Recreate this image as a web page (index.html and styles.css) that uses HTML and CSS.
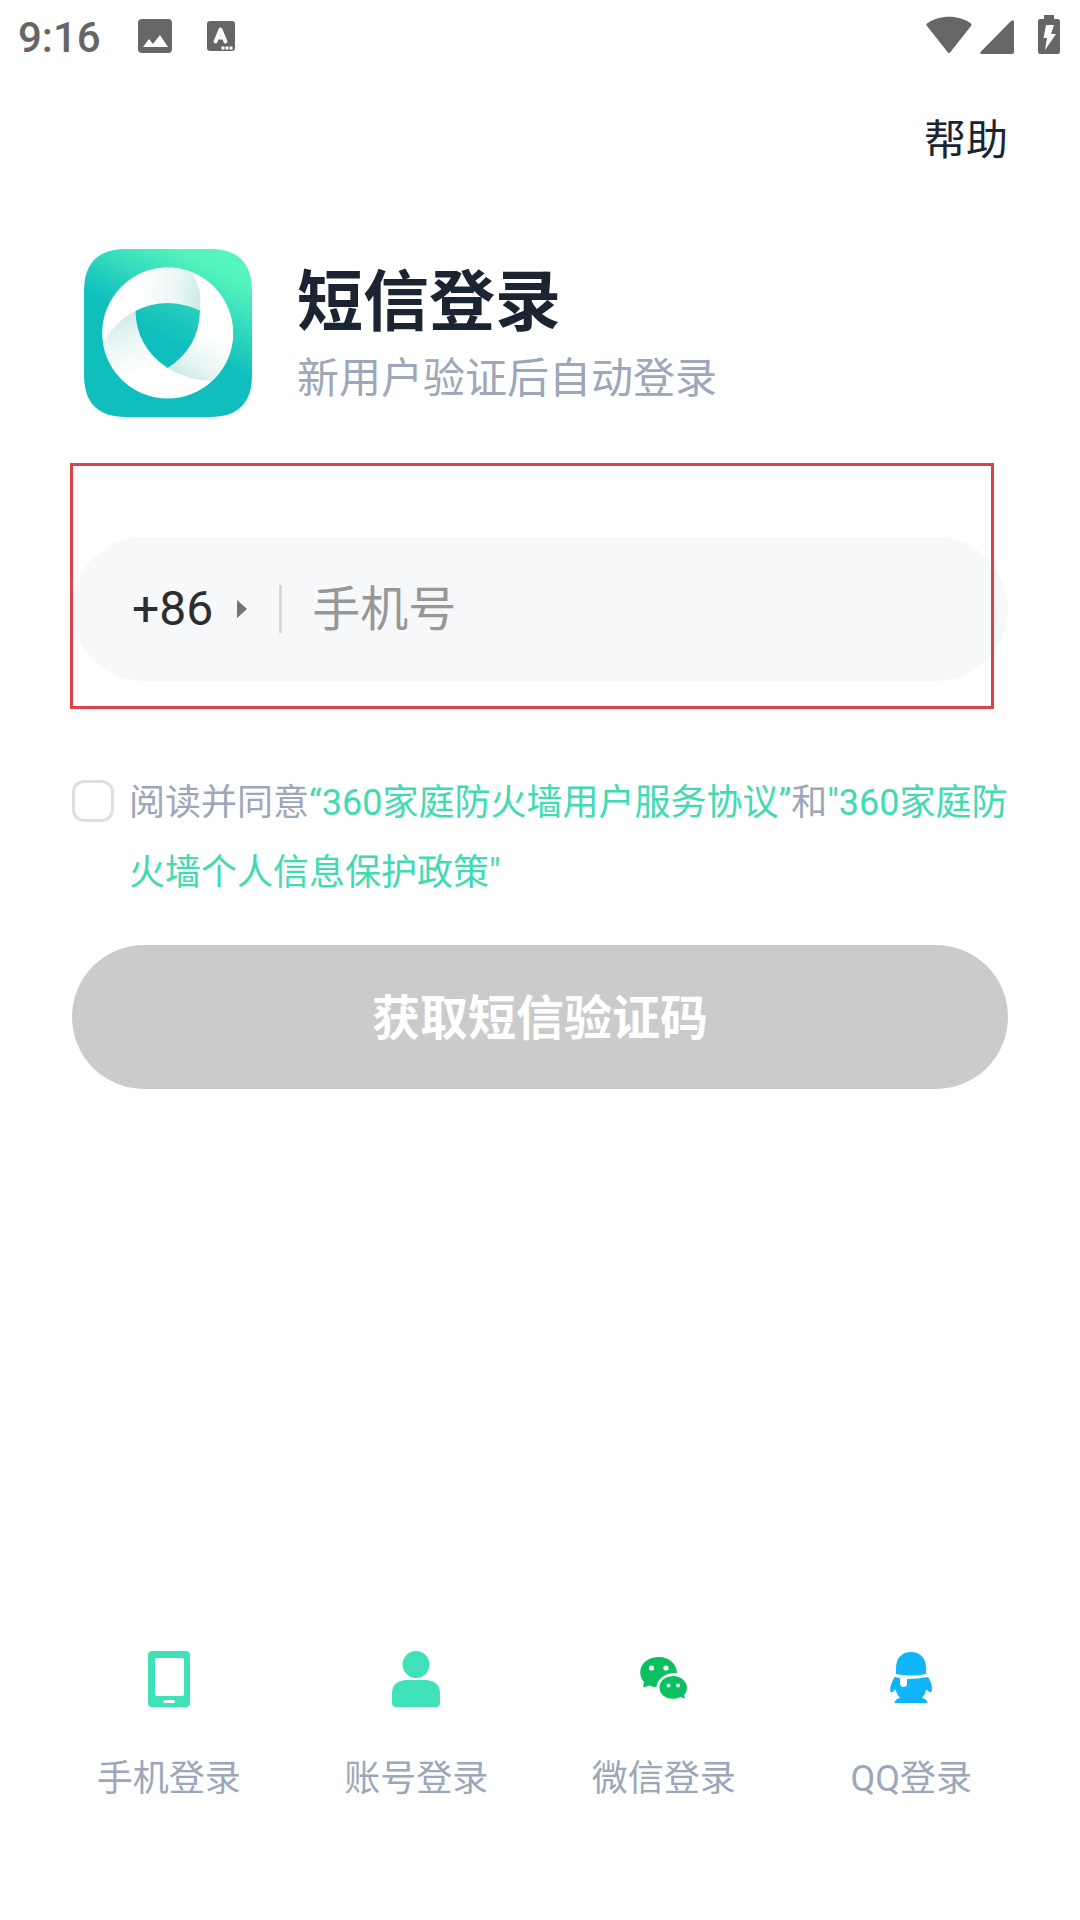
FILE: index.html
```html
<!DOCTYPE html>
<html lang="zh-CN">
<head>
<meta charset="utf-8">
<meta name="viewport" content="width=device-width, initial-scale=1">
<title>短信登录</title>
<link rel="stylesheet" href="styles.css">
</head>
<body>
<header class="status-bar">
  <div class="status-left">
    <time class="clock">9:16</time>
    <svg class="icon-image" width="34" height="34" viewBox="0 0 34 34" aria-hidden="true">
      <rect width="34" height="34" rx="4" fill="#666"/>
      <path d="M5 28l6-8 4 5 7-9 8 12z" fill="#fff"/>
    </svg>
    <svg class="icon-input" width="28" height="30" viewBox="0 0 28 30" aria-hidden="true">
      <rect width="28" height="30" rx="3" fill="#666"/>
      <path d="M8.500 20.500L13.500 8.500L18.500 20.500M10.500 16.500h6" fill="none" stroke="#fff" stroke-width="3.800" stroke-linecap="round" stroke-linejoin="round"/>
      <path d="M14.500 25.500h3v3h-3zM18.500 25.500h3v3h-3zM22.500 25.500h3v3h-3z" fill="#fff"/>
    </svg>
  </div>
  <div class="status-right">
    <svg width="46" height="40" viewBox="0 0 46 40" aria-hidden="true">
      <path d="M1 8.500C13-.500 33-.500 45 8.500Q46 9.500 45 11L24.500 37Q23 39 21.500 37L1 11Q0 9.500 1 8.500z" fill="#666"/>
    </svg>
    <svg class="icon-signal" width="34" height="40" viewBox="0 0 34 40" aria-hidden="true">
      <path d="M34 7v30q0 2-2 2H2q-3 0-1-2.500L31 6q3-2 3 1z" fill="#666"/>
    </svg>
    <svg class="icon-battery" width="22" height="40" viewBox="0 0 22 40" aria-hidden="true">
      <path d="M6 0h10v4h4q2 0 2 2v30q0 3-2 3H2q-2 0-2-3V6q0-2 2-2h4z" fill="#666"/>
      <path d="M8 10h8l-3 9h5L7 35l2-12H5.500z" fill="#fff"/>
    </svg>
  </div>
</header>

<nav class="top-nav"><a class="help" href="#help">帮助</a></nav>

<main class="login">
  <div class="brand">
    <svg class="logo" width="168" height="168" viewBox="0 0 168 168" aria-hidden="true">
      <defs>
        <linearGradient id="tile" gradientUnits="userSpaceOnUse" x1="161" y1="27" x2="120" y2="105">
          <stop offset="0" stop-color="#55f6bd"/>
          <stop offset=".15" stop-color="#50f0bd"/>
          <stop offset="1" stop-color="#10bfbd"/>
        </linearGradient>
        <linearGradient id="core" gradientUnits="userSpaceOnUse" x1="110" y1="50" x2="88" y2="92">
          <stop offset="0" stop-color="#2fd0bc"/>
          <stop offset="1" stop-color="#10bfbd"/>
        </linearGradient>
        <linearGradient id="fold-top" gradientUnits="userSpaceOnUse" x1="117" y1="44" x2="55" y2="40">
          <stop offset="0" stop-color="#cbebe6"/>
          <stop offset=".35" stop-color="#e9f6f4"/>
          <stop offset="1" stop-color="#fff"/>
        </linearGradient>
        <linearGradient id="fold-left" gradientUnits="userSpaceOnUse" x1="38" y1="66" x2="58" y2="122">
          <stop offset="0" stop-color="#cbebe6"/>
          <stop offset=".35" stop-color="#e6f5f3"/>
          <stop offset="1" stop-color="#fff"/>
        </linearGradient>
        <linearGradient id="fold-right" gradientUnits="userSpaceOnUse" x1="105" y1="133" x2="132" y2="88">
          <stop offset="0" stop-color="#cbebe6"/>
          <stop offset=".35" stop-color="#e6f5f3"/>
          <stop offset="1" stop-color="#fff"/>
        </linearGradient>
      </defs>
      <path d="M42 0H126C154 0 168 14 168 42V126C168 154 154 168 126 168H42C14 168 0 154 0 126V42C0 14 14 0 42 0z" fill="url(#tile)"/>
      <circle cx="83.700" cy="84" r="65.500" fill="#fff"/>
      <path d="M107.700 23.300Q119 41 116 61.500Q100 54 83.700 54Q67 54 51.500 62V27A65 65 0 0 1 107.700 23.300z" fill="url(#fold-top)"/>
      <path d="M19.300 94.300Q31 72 51.500 62Q52 98 83.700 119L60 145A65 65 0 0 1 19.300 94.300z" fill="url(#fold-left)"/>
      <path d="M83.700 119Q105 132 127.700 131.700A65 65 0 0 0 149 84L116 61.500Q115 99 83.700 119z" fill="url(#fold-right)"/>
      <path d="M51.500 62Q67 54 83.700 54T116 61.500Q115 99 83.700 119Q52 98 51.500 62z" fill="url(#core)"/>
    </svg>
    <div class="brand-text">
      <h1 class="title">短信登录</h1>
      <p class="subtitle">新用户验证后自动登录</p>
    </div>
  </div>

  <form class="form">
    <div class="phone-field">
      <button class="country" type="button" aria-label="国家代码 +86">+86<svg width="10" height="18" viewBox="0 0 10 18" aria-hidden="true"><path d="M0 0l10 9-10 9z" fill="#737476"/></svg></button>
      <input class="phone-input" type="tel" placeholder="手机号" aria-label="手机号">
      <span class="highlight" aria-hidden="true"></span>
    </div>
    <div class="consent">
      <input class="consent-box" id="agree" type="checkbox">
      <p class="consent-text"><label for="agree">阅读并同意</label><a href="#terms">“360家庭防火墙用户服务协议”</a>和<a href="#privacy">"360家庭防火墙个人信息保护政策"</a></p>
    </div>
    <button class="submit" type="button">获取短信验证码</button>
  </form>
</main>

<footer class="methods">
  <button class="method" type="button">
    <svg width="56" height="56" viewBox="0 0 56 56" aria-hidden="true">
      <path fill-rule="evenodd" d="M11 0H45Q49 0 49 4V52Q49 56 45 56H11Q7 56 7 52V4Q7 0 11 0zM15 7Q14 7 14 8V43Q14 45 16 45H41Q43 45 43 43V9Q43 7 41 7zM24 49Q22 49 22 50.500T24 52H32Q34 52 34 50.500T32 49z" fill="#40e0b8"/>
    </svg>
    手机登录
  </button>
  <button class="method" type="button">
    <svg width="56" height="56" viewBox="0 0 56 56" aria-hidden="true">
      <circle cx="28" cy="13.500" r="13.500" fill="#40e0b8"/>
      <path d="M17 29H39Q52 31 52 42V52Q52 56 48 56H8Q4 56 4 52V42Q4 31 17 29z" fill="#40e0b8"/>
    </svg>
    账号登录
  </button>
  <button class="method" type="button">
    <svg width="56" height="56" viewBox="0 0 56 56" aria-hidden="true">
      <path d="M23 6C33 6 40.500 12.500 41 22C31 21 21 27 20.500 36Q17 36 13.500 34.500L7 36.500L8 31C0 22 5 6 23 6z" fill="#0bc15f"/>
      <path d="M37 25C45 25 51 30 51 37Q51 41 48 44L49 47.500L44.500 46C34 51 23 45 23.500 36Q24.500 26 37 25z" fill="#0bc15f"/>
      <g fill="#fff"><circle cx="15.500" cy="17" r="2.600"/><circle cx="30" cy="17" r="2.600"/><circle cx="32.500" cy="34.500" r="2"/><circle cx="42" cy="34.500" r="2"/></g>
    </svg>
    微信登录
  </button>
  <button class="method" type="button">
    <svg width="56" height="56" viewBox="0 0 56 56" aria-hidden="true">
      <path d="M13 23V17C13 7 19 1 28 1S43 7 43 17V23Q28 26 13 23z" fill="#10b4f8"/>
      <path d="M11.500 26L17 27V32Q17 36 20.500 36T24 32V28Q34 28 45 26C49 32 50 39 48 41Q47 42 43.500 38.500Q42 44 39 47Q44 48 44.500 52H11.500Q12 48 17 47Q13.500 43 12.500 38.500Q9 42 7.500 41Q6 36 11.500 26z" fill="#10b4f8"/>
    </svg>
    QQ登录
  </button>
</footer>
</body>
</html>
```
FILE: styles.css
```css
* {
  box-sizing: border-box;
}

body {
  margin: 0;
  min-height: 100vh;
  display: flex;
  flex-direction: column;
  background: #fff;
  color: #1b2431;
  font-family: Roboto, "Noto Sans CJK SC", sans-serif;
}

button,
input {
  font: inherit;
}

button {
  border: 0;
  padding: 0;
  background: none;
  cursor: pointer;
}

a {
  text-decoration: none;
}

svg {
  display: block;
  flex: none;
}

.status-bar {
  display: flex;
  justify-content: space-between;
  height: 72px;
  padding: 0 20px 0 18px;
}

.status-left,
.status-right {
  display: flex;
  align-items: center;
  height: 72px;
}

.clock {
  padding-top: 4px;
  color: #666;
  font-size: 42px;
  font-weight: 500;
  line-height: 68px;
}

.icon-image {
  margin-left: 37px;
}

.icon-input {
  margin-left: 35px;
}

.status-right {
  height: 70px;
}

.icon-signal {
  margin-left: 8px;
}

.icon-battery {
  margin-left: 24px;
}

.top-nav {
  display: flex;
  justify-content: flex-end;
  padding: 39px 72px 0;
}

.help {
  color: #1b2431;
  font-size: 42px;
  line-height: 60px;
}

.login {
  padding: 78px 72px 0;
}

.brand {
  display: flex;
  gap: 45px;
  padding-left: 12px;
}

.brand-text {
  padding-top: 8px;
}

.title {
  margin: 0;
  font-size: 66px;
  font-weight: 700;
  line-height: 92px;
}

.subtitle {
  margin: 0;
  color: #9ca7ba;
  font-size: 42px;
  line-height: 60px;
}

.form {
  display: flex;
  flex-direction: column;
  padding-top: 120px;
}

.phone-field {
  position: relative;
  display: flex;
  align-items: center;
  height: 144px;
  padding: 0 60px;
  border-radius: 72px;
  background: #f7f8fa;
}

.country {
  display: flex;
  align-items: center;
  gap: 24px;
  height: 48px;
  padding-right: 32px;
  border-right: 3px solid #d6d8da;
  color: #2c2d2f;
  font-size: 48px;
  line-height: 52px;
}

.phone-input {
  flex: 1;
  min-width: 0;
  height: 96px;
  padding: 0 30px;
  border: 0;
  outline: 0;
  background: none;
  color: #2c2d2f;
  font-size: 48px;
}

.phone-input::placeholder {
  color: #979797;
  opacity: 1;
}

.highlight {
  position: absolute;
  top: -74px;
  right: 14px;
  bottom: -28px;
  left: -2px;
  border: 3px solid #dc4348;
  pointer-events: none;
}

.consent {
  display: flex;
  gap: 15px;
  padding-top: 84px;
}

.consent-box {
  appearance: none;
  flex: none;
  width: 42px;
  height: 42px;
  margin: 15px 0 0;
  border: 3px solid #dce0e5;
  border-radius: 12px;
  background: #fff;
}

.consent-box:checked {
  background: #40e0b8;
}

.consent-text {
  flex: 1;
  margin: 0 -12px 0 0;
  padding-top: 3px;
  color: #9ca7ba;
  font-size: 36px;
  line-height: 70px;
}

.consent-text a {
  color: #40dbb0;
}

.submit {
  height: 144px;
  margin-top: 37px;
  padding-top: 4px;
  border-radius: 72px;
  background: #cbcbcb;
  color: #fff;
  font-size: 48px;
  font-weight: 700;
  line-height: 56px;
}

.methods {
  display: grid;
  grid-template-columns: repeat(4, 1fr);
  margin-top: auto;
  padding: 60px 45px 114px;
}

.method {
  display: flex;
  flex-direction: column;
  align-items: center;
  gap: 45px;
  color: #9ca7ba;
  font-size: 36px;
  line-height: 54px;
}
```
